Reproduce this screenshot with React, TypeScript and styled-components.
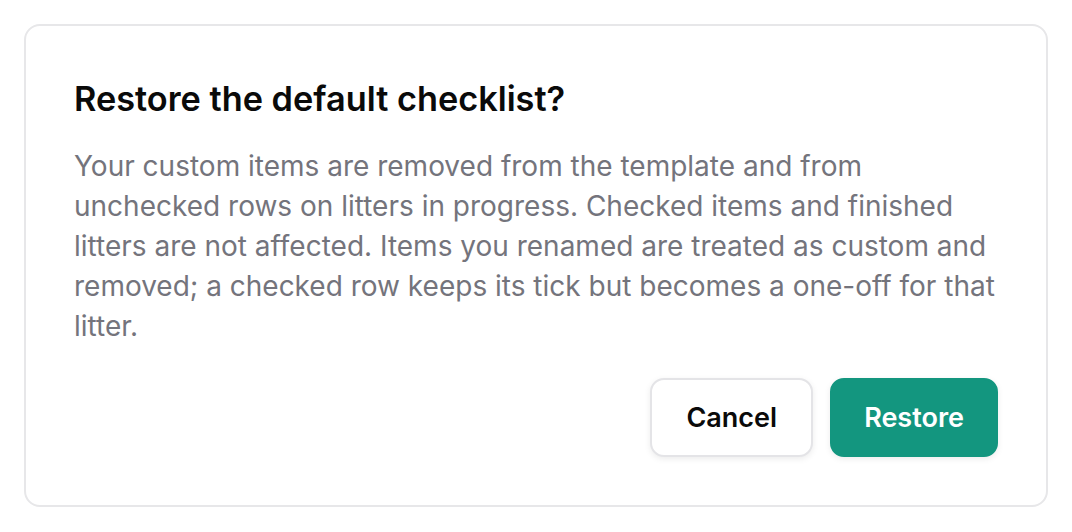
import styled, { createGlobalStyle } from 'styled-components';

const GlobalStyle = createGlobalStyle`
  html, body {
    margin: 0;
    padding: 0;
    background: #ffffff;
  }
  body {
    font-family: Inter, 'Noto Sans', sans-serif;
    -webkit-font-smoothing: antialiased;
  }
`;

const Page = styled.div`
  padding: 24px;
`;

const Card = styled.section`
  box-sizing: border-box;
  width: 100%;
  border: 2px solid #e7e7e9;
  border-radius: 16px;
  background: #ffffff;
  padding: 48px;
  display: flex;
  flex-direction: column;
`;

const Title = styled.h2`
  margin: 4px 0 0;
  font-size: 34.3px;
  line-height: 42px;
  font-weight: 600;
  color: #0a0a0a;
`;

const Description = styled.p`
  margin: 26px 0 0;
  font-size: 28px;
  line-height: 40px;
  font-weight: 400;
  color: #74747c;
`;

const Actions = styled.div`
  display: flex;
  justify-content: flex-end;
  gap: 17px;
  margin-top: 32px;
`;

const Button = styled.button<{ $primary?: boolean }>`
  box-sizing: border-box;
  height: 79px;
  padding: 0 ${(p) => (p.$primary ? 32 : 34)}px;
  border-radius: 14px;
  font-family: Inter, 'Noto Sans', sans-serif;
  font-size: 27px;
  font-weight: 600;
  cursor: pointer;
  border: 2px solid ${(p) => (p.$primary ? '#13967f' : '#e4e4e7')};
  background: ${(p) => (p.$primary ? '#13967f' : '#ffffff')};
  color: ${(p) => (p.$primary ? '#ffffff' : '#0a0a0a')};
  box-shadow: 0 2px 6px rgba(0, 0, 0, 0.08);
`;

export default function App() {
  return (
    <>
      <GlobalStyle />
      <Page>
        <Card role="alertdialog">
          <Title>Restore the default checklist?</Title>
          <Description>
            Your custom items are removed from the template and from unchecked rows on litters in
            progress. Checked items and finished litters are not affected. Items you renamed are
            treated as custom and removed; a checked row keeps its tick but becomes a one-off for
            that litter.
          </Description>
          <Actions>
            <Button>Cancel</Button>
            <Button $primary>Restore</Button>
          </Actions>
        </Card>
      </Page>
    </>
  );
}
